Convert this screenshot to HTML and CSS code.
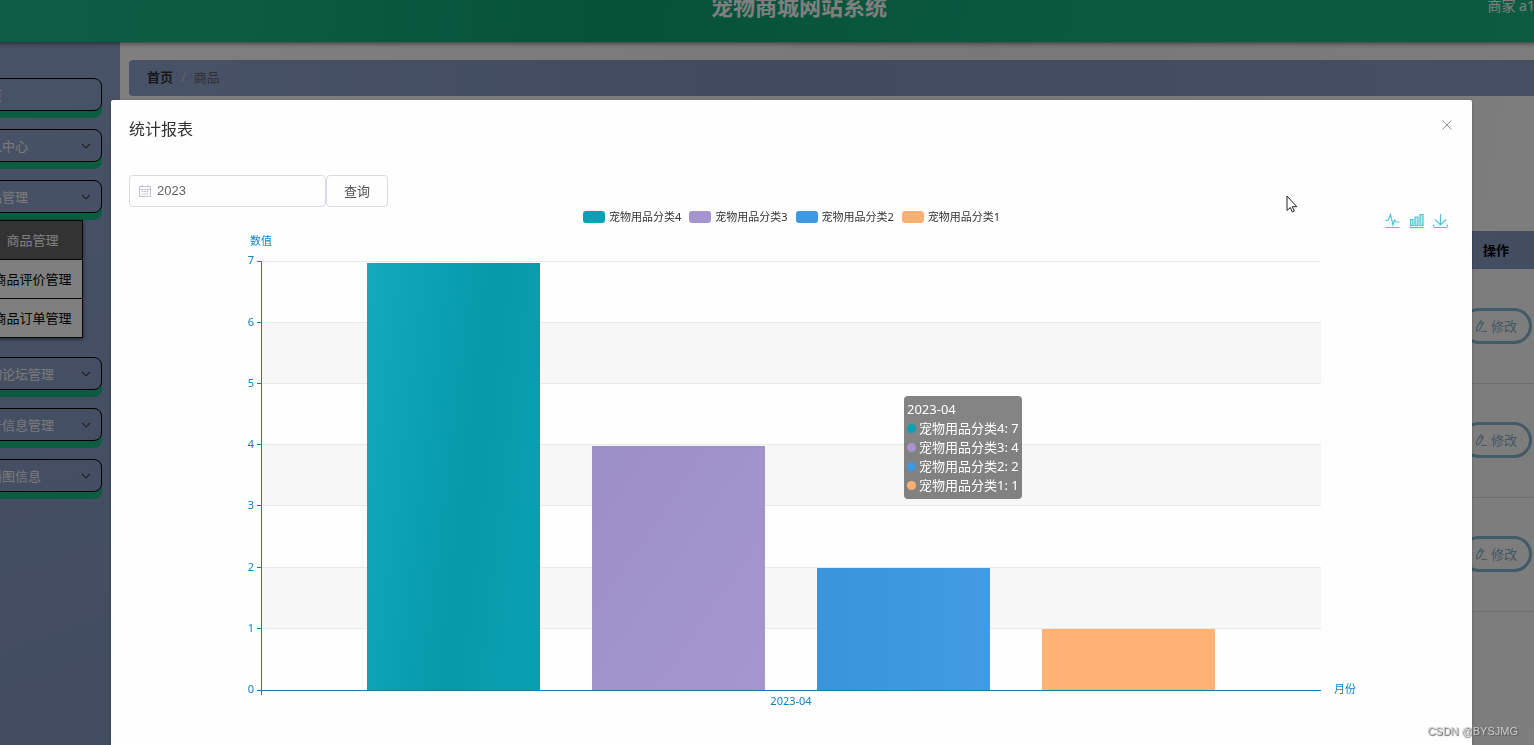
FILE: index.html
```html
<!DOCTYPE html>
<html lang="zh-CN">
<head>
<meta charset="utf-8">
<title>宠物商城网站系统</title>
<link rel="stylesheet" href="styles.css">
</head>
<body>
<svg class="symbols" aria-hidden="true">
  <symbol id="chevron" viewBox="0 0 10 10"><path d="M1 3l4 4 4-4" fill="none" stroke="currentColor" stroke-width="1.2"/></symbol>
  <symbol id="edit" viewBox="0 0 12 12"><path d="M1.500 8L5.500 1l3 1.700-4 7L1.700 11zM4.500 2.700l3 1.700M6.500 11.500H12" fill="none" stroke="currentColor" stroke-width="1.100"/></symbol>
</svg>

<div class="app">
  <header class="topbar">
    <h1 class="topbar-title">宠物商城网站系统</h1>
    <span class="topbar-user">商家 a1</span>
  </header>
  <div class="body">
    <nav class="sidebar">
      <button class="nav-item" type="button">首页</button>
      <button class="nav-item" type="button">个人中心<svg class="chevron"><use href="#chevron"/></svg></button>
      <button class="nav-item" type="button">商品管理<svg class="chevron"><use href="#chevron"/></svg></button>
      <div class="submenu">
        <a class="submenu-item active" href="#">商品管理</a>
        <a class="submenu-item" href="#">商品评价管理</a>
        <a class="submenu-item" href="#">商品订单管理</a>
      </div>
      <button class="nav-item" type="button">宠物论坛管理<svg class="chevron"><use href="#chevron"/></svg></button>
      <button class="nav-item" type="button">公告信息管理<svg class="chevron"><use href="#chevron"/></svg></button>
      <button class="nav-item" type="button">轮播图信息<svg class="chevron"><use href="#chevron"/></svg></button>
    </nav>
    <main class="main">
      <div class="breadcrumb"><a class="crumb-home" href="#">首页</a><span class="crumb-sep">/</span><span class="crumb-current">商品</span></div>
      <table class="goods">
        <thead><tr><th></th><th class="col-action">操作</th></tr></thead>
        <tbody>
          <tr><td></td><td><button class="edit" type="button"><svg class="edit-icon"><use href="#edit"/></svg>修改</button></td></tr>
          <tr><td></td><td><button class="edit" type="button"><svg class="edit-icon"><use href="#edit"/></svg>修改</button></td></tr>
          <tr><td></td><td><button class="edit" type="button"><svg class="edit-icon"><use href="#edit"/></svg>修改</button></td></tr>
        </tbody>
      </table>
    </main>
  </div>
</div>

<div class="overlay">
  <section class="dialog" role="dialog" aria-labelledby="dialog-title">
    <div class="dialog-head">
      <h2 class="dialog-title" id="dialog-title">统计报表</h2>
      <button class="close" type="button" aria-label="关闭"><svg class="close-icon" viewBox="0 0 14 14"><path d="M2.500 2.500l9 9M11.500 2.500l-9 9" fill="none" stroke="#909399"/></svg></button>
    </div>
    <form class="query">
      <label class="year">
        <svg class="year-icon" viewBox="0 0 12 12"><path d="M.5 1.5h11v10H.5zM.5 4.5h11M3 0v2.500M9 0v2.500M2.500 6.500h2M5 6.500h2M7.500 6.500h2M2.500 9h2M5 9h2M7.500 9h2" fill="none" stroke="#c0c4cc"/></svg>
        <input class="year-input" type="text" value="2023" aria-label="年份">
      </label>
      <button class="query-button" type="button">查询</button>
    </form>
    <div class="chart">
      <div class="chart-head">
        <div class="legend">
          <button class="legend-item" type="button"><span class="swatch teal"></span>宠物用品分类4</button>
          <button class="legend-item" type="button"><span class="swatch purple"></span>宠物用品分类3</button>
          <button class="legend-item" type="button"><span class="swatch blue"></span>宠物用品分类2</button>
          <button class="legend-item" type="button"><span class="swatch orange"></span>宠物用品分类1</button>
        </div>
        <div class="toolbox">
          <button class="tool" type="button" aria-label="折线图"><svg class="tool-icon" viewBox="0 0 15 16"><path d="M.5 7.500h2.500l2.500-6 2.500 10.500 1.500-5 1.500 2h3.500M.5 14.500h14"/></svg></button>
          <button class="tool" type="button" aria-label="柱状图"><svg class="tool-icon" viewBox="0 0 15 16"><path class="tool-fill" d="M1.500 6.500h2.500v6H1.500zM6 4h3v8.500H6zM11 1.500h3v11h-3z"/><path d="M.5 14.500h14"/></svg></button>
          <button class="tool" type="button" aria-label="保存为图片"><svg class="tool-icon" viewBox="0 0 15 16"><path d="M7.500 1v11M2 6.500l5.500 5.500L13 6.500M.5 11.500v1.500l1 1.500h12l1-1.500v-1.500"/></svg></button>
        </div>
      </div>
      <svg class="plot" viewBox="0 0 1325 500" role="img" aria-label="2023-04 商品分类统计">
        <defs>
          <linearGradient id="teal" x1="0" y1="0" x2="1" y2=".3"><stop offset="0" stop-color="#13aabc"/><stop offset=".7" stop-color="#0599aa"/><stop offset="1" stop-color="#0a9fb0"/></linearGradient>
          <linearGradient id="purple" x1="0" y1="0" x2="1" y2="1"><stop offset="0" stop-color="#9c8fc5"/><stop offset="1" stop-color="#a596d0"/></linearGradient>
          <linearGradient id="blue" x1="0" y1="0" x2="1" y2="0"><stop offset="0" stop-color="#3994dc"/><stop offset="1" stop-color="#429be3"/></linearGradient>
        </defs>
        <g fill="#f7f7f7"><path d="M133 92h1059v61H133zM133 214h1059v62H133zM133 337h1059v61H133z"/></g>
        <path d="M133 31.500h1059M133 92.500h1059M133 153.500h1059M133 214.500h1059M133 275.500h1059M133 337.500h1059M133 398.500h1059" stroke="#e8e9eb"/>
        <rect x="238" y="33" width="173" height="427" fill="url(#teal)"/>
        <rect x="463" y="216" width="173" height="244" fill="url(#purple)"/>
        <rect x="688" y="338" width="173" height="122" fill="url(#blue)"/>
        <rect x="913" y="399" width="173" height="61" fill="#feb274"/>
        <path d="M132.500 31v434M128 31.500h5M128 92.500h5M128 153.500h5M128 214.500h5M128 275.500h5M128 337.500h5M128 398.500h5M128 460.500h1064" stroke="#137dab" fill="none"/>
        <g class="axis-text">
          <text x="132" y="15" text-anchor="middle">数值</text>
          <g text-anchor="end">
            <text x="125" y="34">7</text><text x="125" y="96">6</text><text x="125" y="157">5</text><text x="125" y="218">4</text><text x="125" y="279">3</text><text x="125" y="341">2</text><text x="125" y="402">1</text><text x="125" y="463">0</text>
          </g>
          <text x="662" y="475" text-anchor="middle">2023-04</text>
          <text x="1205" y="463">月份</text>
        </g>
      </svg>
      <div class="tooltip">
        <div>2023-04</div>
        <div class="tip-row"><span class="dot teal"></span>宠物用品分类4: 7</div>
        <div class="tip-row"><span class="dot purple"></span>宠物用品分类3: 4</div>
        <div class="tip-row"><span class="dot blue"></span>宠物用品分类2: 2</div>
        <div class="tip-row"><span class="dot orange"></span>宠物用品分类1: 1</div>
      </div>
    </div>
  </section>
</div>
<svg class="cursor" viewBox="0 0 12 18" aria-hidden="true"><path d="M1 1v14.500l3.300-3 2 4.500 2-1-2-4.300h4.500z" fill="#fff" stroke="#222"/></svg>
<div class="watermark">CSDN @BYSJMG</div>
</body>
</html>
```
FILE: styles.css
```css
* { box-sizing: border-box; }

html { overflow: hidden; }

body {
  margin: 0;
  height: 100vh;
  overflow: hidden;
  background: #fff;
  color: #303133;
  font: 13px/20px "Noto Sans", "Noto Sans CJK SC", sans-serif;
}

button {
  margin: 0;
  padding: 0;
  border: 0;
  background: none;
  color: inherit;
  font: inherit;
}

a { color: inherit; text-decoration: none; }

.symbols { display: none; }

.app {
  display: flex;
  flex-direction: column;
  min-height: 100vh;
  margin: 0 -184px 0 -120px;
}

.topbar {
  display: grid;
  grid-template-columns: 1fr auto 1fr;
  height: 42px;
  padding: 0 183px;
  background: linear-gradient(100deg, #1abc8a, #18b884 20%, #0ba472 40%, #18b682 70%, #18b884);
  box-shadow: 0 1px 5px rgba(0, 0, 0, .6);
  color: #fff;
  line-height: 12px;
  z-index: 1;
}

.topbar-title {
  grid-column: 2;
  margin: 0;
  font-size: 22px;
  line-height: 12px;
}

.topbar-user { justify-self: end; font-size: 14px; }

.body { display: flex; flex: 1; }

.sidebar {
  display: flex;
  flex-direction: column;
  gap: 18px;
  width: 240px;
  padding: 36px 18px 0 80px;
  background: linear-gradient(160deg, #92a6d0, #8598c2);
}

.nav-item {
  display: flex;
  align-items: center;
  justify-content: space-between;
  height: 33px;
  padding: 0 10px 0 15px;
  border: 1px solid #000;
  border-radius: 8px;
  box-shadow: 0 7px 0 #18b884;
  color: #f4f4f4;
  line-height: 18px;
}

.chevron { width: 10px; height: 10px; color: #444; }

.submenu {
  width: 101px;
  margin: -11px 0 1px 22px;
  border: 1px solid #111;
  background: #fff;
  box-shadow: 0 1px 4px rgba(0, 0, 0, .6);
  color: #000;
}

.submenu-item {
  display: block;
  padding: 9px 0;
  border-bottom: 1px solid #111;
  text-align: center;
}

.submenu-item:last-child { border-bottom: 0; }

.submenu-item.active { background: #666; color: #fff; }

.main {
  flex: 1;
  padding: 18px 0 0 9px;
  background: linear-gradient(100deg, #fff, #f0f0f0 50%, #fff);
}

.breadcrumb {
  display: flex;
  gap: 8px;
  padding: 8px 18px 10px;
  border-radius: 4px;
  background: linear-gradient(90deg, #92a6d0, #8294bc 40%, #8ea0c8);
  line-height: 18px;
}

.crumb-home { font-weight: 700; }
.crumb-sep { color: #c0c4cc; }
.crumb-current { color: #606266; }

.goods {
  width: 100%;
  margin-top: 135px;
  border-collapse: collapse;
  table-layout: fixed;
}

.goods th {
  height: 38px;
  padding: 0 22px;
  background: linear-gradient(90deg, #8a9cc2, #8294bc);
  color: #000;
  text-align: left;
}

.goods .col-action { width: 257px; }

.goods td {
  height: 114px;
  padding: 0;
  border-bottom: 1px solid #ddd;
}

.edit {
  display: flex;
  align-items: center;
  gap: 4px;
  height: 36px;
  padding: 0 12px 0 11px;
  border: 3px solid #82b8d0;
  border-radius: 18px;
  color: #86b0c4;
}

.edit-icon { width: 12px; height: 12px; }

.overlay {
  position: fixed;
  inset: 0;
  z-index: 2;
  display: flex;
  padding: 100px 62px 0 111px;
  background: rgba(0, 0, 0, .5);
}

.dialog {
  flex: 1;
  padding: 18px 18px 0;
  border-radius: 2px 2px 0 0;
  background: #fefefe;
  box-shadow: 0 1px 3px rgba(0, 0, 0, .3);
}

.dialog-head {
  display: flex;
  align-items: flex-start;
  justify-content: space-between;
}

.dialog-title {
  margin: 0;
  font-size: 16px;
  font-weight: 400;
  line-height: 22px;
}

.close { display: flex; }
.close-icon { width: 14px; height: 14px; }

.query { display: flex; margin-top: 35px; }

.year {
  display: flex;
  align-items: center;
  gap: 6px;
  width: 197px;
  height: 32px;
  padding: 0 9px;
  border: 1px solid #d8dbe2;
  border-radius: 4px;
}

.year-icon { flex: none; width: 12px; height: 12px; }

.year-input {
  flex: 1;
  min-width: 0;
  padding: 0;
  border: 0;
  outline: 0;
  background: none;
  color: #606266;
  font: 13px/20px "Liberation Sans", sans-serif;
}

.query-button {
  height: 32px;
  padding: 0 17px;
  border: 1px solid #d8dbe2;
  border-radius: 4px;
  color: #505256;
  line-height: 18px;
}

.chart { position: relative; padding-top: 1px; }

.chart-head {
  display: grid;
  grid-template-columns: 1fr auto 1fr;
  align-items: start;
  height: 22px;
}

.legend {
  grid-column: 2;
  display: flex;
  gap: 8px;
  color: #333;
  font-size: 11px;
  line-height: 18px;
}

.legend-item { display: flex; align-items: center; gap: 4px; }

.swatch { width: 22px; height: 12px; border-radius: 3px; }

.teal { background: #0aa2b3; }
.purple { background: #a594cf; }
.blue { background: #3e98e2; }
.orange { background: #fdb072; }

.toolbox {
  display: flex;
  gap: 9px;
  justify-self: end;
  padding: 5px 6px 0 0;
}

.tool { display: flex; }

.tool-icon {
  width: 15px;
  height: 16px;
  fill: none;
  stroke: #4fc3d1;
  stroke-width: 1.2;
}

.tool-fill { fill: #b5f0f5; }

.plot { display: block; width: 100%; }

.axis-text { fill: #0f83bd; font-size: 11px; }

.tooltip {
  position: absolute;
  top: 189px;
  left: 775px;
  padding: 4px 3px;
  border-radius: 4px;
  background: rgba(50, 50, 50, .6);
  color: #fff;
  line-height: 19px;
  white-space: nowrap;
}

.tip-row { display: flex; align-items: center; gap: 3px; }

.dot { width: 9px; height: 9px; border-radius: 50%; }

.cursor {
  position: fixed;
  top: 195px;
  left: 1286px;
  z-index: 3;
  width: 12px;
  height: 18px;
}

.watermark {
  position: fixed;
  right: 16px;
  bottom: 4px;
  z-index: 3;
  color: #ccc;
  font: 11px/20px "Liberation Sans", sans-serif;
  text-shadow: 1px 1px 1px #555;
}
```
